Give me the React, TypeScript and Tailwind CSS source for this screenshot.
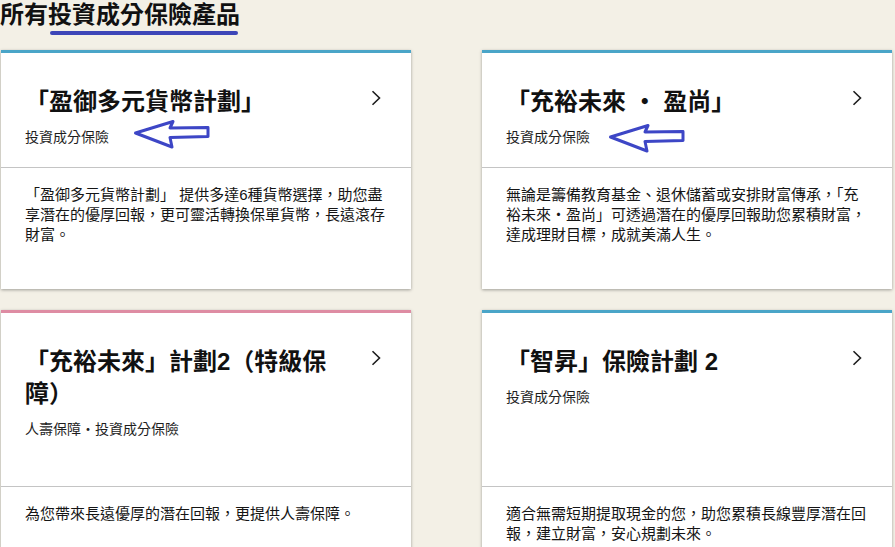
import React from "react";

type Product = {
  title: string;
  tags: string;
  desc: string;
  accent: string;
  arrow?: { left: string; top: string };
};

const ROW_ONE: Product[] = [
  {
    title: "「盈御多元貨幣計劃」",
    tags: "投資成分保險",
    desc: "「盈御多元貨幣計劃」 提供多達6種貨幣選擇，助您盡享潛在的優厚回報，更可靈活轉換保單貨幣，長遠滾存財富。",
    accent: "border-[#4aa5c8]",
    arrow: { left: "left-[132px]", top: "top-[65px]" },
  },
  {
    title: "「充裕未來 ・ 盈尚」",
    tags: "投資成分保險",
    desc: "無論是籌備教育基金、退休儲蓄或安排財富傳承，「充裕未來・盈尚」可透過潛在的優厚回報助您累積財富，達成理財目標，成就美滿人生。",
    accent: "border-[#4aa5c8]",
    arrow: { left: "left-[126px]", top: "top-[69px]" },
  },
];

const ROW_TWO: Product[] = [
  {
    title: "「充裕未來」計劃2（特級保障）",
    tags: "人壽保障・投資成分保險",
    desc: "為您帶來長遠優厚的潛在回報，更提供人壽保障。",
    accent: "border-[#de8ca3]",
  },
  {
    title: "「智昇」保險計劃 2",
    tags: "投資成分保險",
    desc: "適合無需短期提取現金的您，助您累積長線豐厚潛在回報，建立財富，安心規劃未來。",
    accent: "border-[#4aa5c8]",
  },
];

function Chevron() {
  return (
    <svg width="10" height="16" viewBox="0 0 10 16" className="mt-[4px] mr-[6px] shrink-0">
      <path d="M1.5 1.2 L8.5 8 L1.5 14.8" fill="none" stroke="#1d1d1d" strokeWidth="1.6" />
    </svg>
  );
}

// hand drawn pointer from the screenshot annotation
function PointerArrow({ left, top }: { left: string; top: string }) {
  return (
    <svg
      width="78"
      height="32"
      viewBox="0 0 78 32"
      className={`absolute ${left} ${top} pointer-events-none`}
    >
      <path
        d="M2.5 15 L40 3.5 L37 10 L75 9.5 L75 18.5 L37 19.5 L39 29 Z"
        fill="none"
        stroke="#3d46c6"
        strokeWidth="3"
        strokeLinejoin="round"
      />
    </svg>
  );
}

function ProductCard({ product, headerH, bodyH }: { product: Product; headerH: string; bodyH: string }) {
  return (
    <div className={`relative bg-white border-t-[3px] ${product.accent} shadow-[0_1px_3px_rgba(0,0,0,0.35)]`}>
      <div className={`${headerH} px-6 pt-[33px]`}>
        <div className="flex justify-between items-start">
          <h2 className="w-[318px] text-[24px] leading-[32px] font-bold text-[#111]">{product.title}</h2>
          <Chevron />
        </div>
        <p className="mt-[9px] text-[14px] leading-[20px] text-[#1e1e1e]">{product.tags}</p>
      </div>
      <div className={`${bodyH} border-t border-[#c4c4c4] px-6 pt-[17px]`}>
        <p className="text-[15px] leading-[20px] text-[#151515]">{product.desc}</p>
      </div>
      {product.arrow && <PointerArrow left={product.arrow.left} top={product.arrow.top} />}
    </div>
  );
}

export default function App() {
  return (
    <div
      className="w-[895px] h-[547px] overflow-hidden bg-[#f3f0e6]"
      style={{ fontFamily: '"Liberation Sans", "Noto Sans CJK TC", sans-serif' }}
    >
      {/* Heading */}
      <h1 className="relative text-[24px] leading-[30px] font-bold text-[#111]">
        所有投資成分保險產品
        <span className="absolute left-[50px] top-[31px] w-[188px] h-[4px] rounded-full bg-[#3d46b8]" />
      </h1>

      <div className="mt-[20px] pl-[1px] grid grid-cols-[410px_410px] gap-x-[71px] gap-y-[21px]">
        {ROW_ONE.map((p) => (
          <ProductCard key={p.title} product={p} headerH="h-[114px]" bodyH="h-[122px]" />
        ))}
        {ROW_TWO.map((p) => (
          <ProductCard key={p.title} product={p} headerH="h-[173px]" bodyH="h-[122px]" />
        ))}
      </div>
    </div>
  );
}
